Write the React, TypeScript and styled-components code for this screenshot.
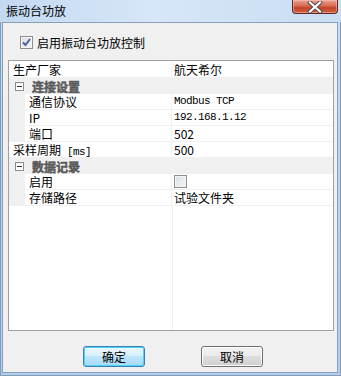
import React from "react";
import styled, { createGlobalStyle } from "styled-components";

const GlobalStyle = createGlobalStyle`
  html, body {
    margin: 0;
    padding: 0;
    background: #ffffff;
  }
  body {
    font-family: "Noto Sans CJK SC", "Liberation Sans", sans-serif;
    font-size: 12px;
  }
`;

type Item = {
  label: string;
  unit?: string;
  value?: string;
  kind: "top" | "category" | "child";
  mono?: boolean;
  check?: boolean;
};

const ITEMS: Item[] = [
  { label: "生产厂家", value: "航天希尔", kind: "top" },
  { label: "连接设置", kind: "category" },
  { label: "通信协议", value: "Modbus TCP", kind: "child", mono: true },
  { label: "IP", value: "192.168.1.12", kind: "child", mono: true },
  { label: "端口", value: "502", kind: "child" },
  { label: "采样周期", unit: " [ms]", value: "500", kind: "top" },
  { label: "数据记录", kind: "category" },
  { label: "启用", kind: "child", check: true },
  { label: "存储路径", value: "试验文件夹", kind: "child" },
];

const App: React.FC = () => {
  return (
    <>
      <GlobalStyle />
      <Window>
        <TitleBar>
          <Title>振动台功放</Title>
          <CloseButton>
            <svg width="16" height="12" viewBox="0 0 16 12">
              <path
                d="M3 1.5 L13 10.5 M13 1.5 L3 10.5"
                stroke="#4a4a4a"
                strokeWidth="4"
                strokeLinecap="square"
              />
              <path
                d="M3 1.5 L13 10.5 M13 1.5 L3 10.5"
                stroke="#ffffff"
                strokeWidth="2.2"
                strokeLinecap="square"
              />
            </svg>
          </CloseButton>
        </TitleBar>
        <Client>
          <EnableRow>
            <CheckBox checked />
            <span>启用振动台功放控制</span>
          </EnableRow>
          <Grid>
            {ITEMS.map((item) =>
              item.kind === "category" ? (
                <CategoryRow key={item.label}>
                  <ExpandBox />
                  <CategoryLabel>{item.label}</CategoryLabel>
                </CategoryRow>
              ) : (
                <Row key={item.label}>
                  {item.kind === "child" && <Gutter />}
                  <LabelCell $child={item.kind === "child"}>
                    {item.label}
                    {item.unit && <Mono>{item.unit}</Mono>}
                  </LabelCell>
                  <ValueCell>
                    {item.check ? (
                      <CheckBox />
                    ) : item.mono ? (
                      <Mono>{item.value}</Mono>
                    ) : (
                      item.value
                    )}
                  </ValueCell>
                </Row>
              )
            )}
            <Filler>
              <FillerLabel />
              <div />
            </Filler>
          </Grid>
          <ButtonRow>
            <Button $primary>确定</Button>
            <Button>取消</Button>
          </ButtonRow>
        </Client>
      </Window>
    </>
  );
};

export default App;

const Window = styled.div`
  width: 341px;
  height: 376px;
  box-sizing: border-box;
  padding: 0 3px 3px 2px;
  display: flex;
  flex-direction: column;
  background: linear-gradient(180deg, #c9ddf3 0%, #bcd4ef 40%, #b4cdea 100%);
  box-shadow: inset 0 0 0 1px #7f9cbd;
`;

const TitleBar = styled.div`
  height: 22px;
  display: flex;
  align-items: flex-start;
  justify-content: space-between;
  background: linear-gradient(90deg, #c3d9f1 0%, #d7e6f8 45%, #c9ddf3 100%);
  margin: 0 -3px 0 -2px;
  padding: 0 3px 0 2px;
`;

const Title = styled.div`
  padding: 4px 0 0 4px;
  font-size: 12px;
  line-height: 14px;
  color: #000000;
`;

const CloseButton = styled.div`
  width: 46px;
  height: 14px;
  box-sizing: border-box;
  display: flex;
  align-items: center;
  justify-content: center;
  border: 1px solid #5e2a22;
  border-top: none;
  border-radius: 0 0 4px 4px;
  background: linear-gradient(180deg, #e9a595 0%, #d8684f 45%, #c4452a 60%, #d0603e 100%);
  box-shadow: inset 0 0 0 1px rgba(255, 200, 190, 0.5);
`;

const Client = styled.div`
  flex: 1;
  display: flex;
  flex-direction: column;
  background: #f0f0f0;
  border: 1px solid #8a9fb8;
  padding: 0 3px 0 5px;
`;

const EnableRow = styled.label`
  display: flex;
  align-items: center;
  gap: 4px;
  margin: 13px 0 0 12px;
  height: 13px;
  font-size: 12px;
  color: #000000;
  line-height: 13px;
`;

const CheckBox = styled.span<{ checked?: boolean }>`
  display: inline-block;
  width: 13px;
  height: 13px;
  box-sizing: border-box;
  border: 1px solid #8e8f8f;
  background: ${({ checked }) =>
    checked
      ? `url("data:image/svg+xml;utf8,<svg xmlns='http://www.w3.org/2000/svg' width='11' height='11'><path d='M2 5.5 L4.5 8 L9 2' fill='none' stroke='%234a5fa8' stroke-width='2'/></svg>") center no-repeat, linear-gradient(135deg, #dcdcdc, #f6f6f6)`
      : "linear-gradient(135deg, #d8dde3, #f7f8f9)"};
  box-shadow: inset 0 0 0 1px #f4f4f4;
  flex-shrink: 0;
`;

const Mono = styled.span`
  font-family: "Liberation Mono", "DejaVu Sans Mono", monospace;
  font-size: 11px;
  letter-spacing: -0.6px;
`;

const Grid = styled.div`
  margin-top: 11px;
  width: 326px;
  height: 271px;
  box-sizing: border-box;
  border: 1px solid #a0a0a0;
  background: #ffffff;
  padding-top: 1px;
  display: flex;
  flex-direction: column;
`;

const Row = styled.div`
  display: flex;
  height: 16px;
  box-sizing: border-box;
  border-bottom: 1px solid #f0f0f0;
  line-height: 15px;
  font-size: 12px;
  color: #000000;
`;

const Gutter = styled.div`
  width: 16px;
  background: #f0f0f0;
`;

const LabelCell = styled.div<{ $child?: boolean }>`
  width: ${({ $child }) => ($child ? "147px" : "163px")};
  padding-left: 4px;
  box-sizing: border-box;
  border-right: 1px solid #f0f0f0;
  white-space: nowrap;
`;

const ValueCell = styled.div`
  flex: 1;
  padding-left: 2px;
  display: flex;
  align-items: center;
  white-space: nowrap;
`;

const CategoryRow = styled.div`
  display: flex;
  align-items: center;
  height: 16px;
  background: #f0f0f0;
  padding-left: 6px;
  gap: 8px;
`;

const ExpandBox = styled.span`
  position: relative;
  width: 9px;
  height: 9px;
  box-sizing: border-box;
  border: 1px solid #8c8c8c;
  background: #ffffff;

  &::after {
    content: "";
    position: absolute;
    left: 1px;
    right: 1px;
    top: 3px;
    height: 1px;
    background: #333333;
  }
`;

const CategoryLabel = styled.span`
  font-weight: bold;
  font-size: 12px;
  color: #5a5a5a;
  -webkit-text-stroke: 0.5px #5a5a5a;
`;

const Filler = styled.div`
  flex: 1;
  display: flex;
`;

const FillerLabel = styled.div`
  width: 163px;
  border-right: 1px solid #f0f0f0;
`;

const ButtonRow = styled.div`
  display: flex;
  margin-top: 15px;
  padding-left: 75px;
  gap: 56px;
`;

const Button = styled.div<{ $primary?: boolean }>`
  width: 62px;
  height: 21px;
  box-sizing: border-box;
  display: flex;
  align-items: center;
  justify-content: center;
  font-size: 12px;
  color: #000000;
  border-radius: 3px;
  border: 1px solid ${({ $primary }) => ($primary ? "#3c7fb1" : "#707070")};
  background: ${({ $primary }) =>
    $primary
      ? "linear-gradient(180deg, #eaf6fd 0%, #d9f0fc 45%, #bee6fd 50%, #a7d9f5 100%)"
      : "linear-gradient(180deg, #f2f2f2 0%, #ebebeb 45%, #dddddd 50%, #cfcfcf 100%)"};
  box-shadow: inset 0 0 0 1px ${({ $primary }) => ($primary ? "#48d7f9" : "#fcfcfc")};
`;
